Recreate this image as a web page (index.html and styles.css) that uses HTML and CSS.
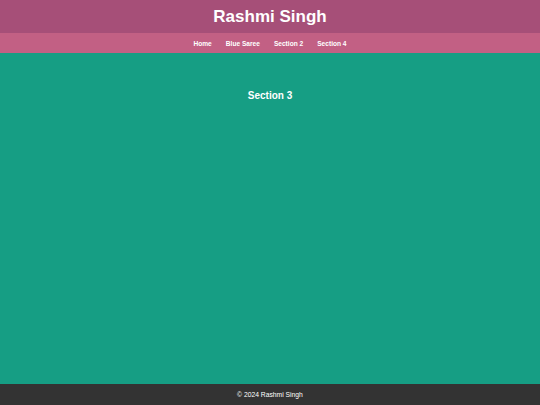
FILE: index.html
```html
<!DOCTYPE html>
<html>
<head>
<meta charset="utf-8">
<link rel="stylesheet" href="styles.css">
</head>
<body>
<div class="page">
  <header class="top">
    <h1 class="title">Rashmi Singh</h1>
  </header>
  <nav class="nav">
    <a href="#">Home</a>
    <a href="#">Blue Saree</a>
    <a href="#">Section 2</a>
    <a href="#">Section 4</a>
  </nav>
  <main class="main">
    <h2 class="section-title">Section 3</h2>
  </main>
  <footer class="foot">© 2024 Rashmi Singh</footer>
</div>
</body>
</html>
```
FILE: styles.css
```css
html, body {
  margin: 0;
  padding: 0;
  height: 100%;
}
body {
  font-family: "Liberation Sans", Arial, sans-serif;
}
.page {
  display: flex;
  flex-direction: column;
  height: 405px;
}
.top {
  background: #a64f78;
  height: 33px;
  display: flex;
  align-items: center;
  justify-content: center;
}
.title {
  margin: 0;
  color: #ffffff;
  font-size: 17px;
  font-weight: bold;
}
.nav {
  background: #c26084;
  height: 20px;
  display: flex;
  align-items: center;
  justify-content: center;
  gap: 14px;
}
.nav a {
  color: #ffffff;
  text-decoration: none;
  font-size: 6.6px;
  font-weight: bold;
}
.main {
  flex: 1;
  background: #169e84;
  display: flex;
  flex-direction: column;
  align-items: center;
  padding-top: 37px;
}
.section-title {
  margin: 0;
  color: #ffffff;
  font-size: 10px;
  font-weight: bold;
}
.foot {
  background: #333333;
  color: #ffffff;
  height: 21px;
  display: flex;
  align-items: center;
  justify-content: center;
  font-size: 6.75px;
}
```
